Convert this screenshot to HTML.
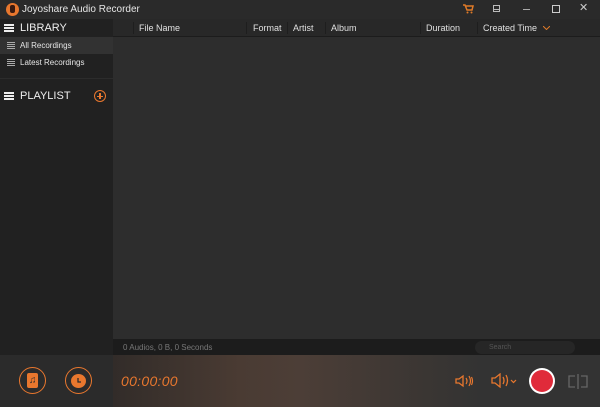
<!DOCTYPE html>
<html><head><meta charset="utf-8"><style>
*{margin:0;padding:0;box-sizing:border-box}
body{width:600px;height:407px;overflow:hidden;background:#2b2b2b;font-family:"Liberation Sans",sans-serif;font-size:9px;color:#ddd;position:relative}
.abs{position:absolute}
#title{left:0;top:0;width:600px;height:19px;background:#2a2a2a}
#side{left:0;top:19px;width:113px;height:336px;background:#212121}
#main{left:113px;top:19px;width:487px;height:320px;background:#2d2d2d}
#hdr{left:113px;top:19px;width:487px;height:18px;background:#282828;border-bottom:1px solid #1c1c1c}
.col{position:absolute;top:4px;font-size:9px;color:#e0e0e0}
.sep{position:absolute;top:3px;width:1px;height:12px;background:#1e1e1e}
#status{left:113px;top:339px;width:487px;height:17px;background:#1c1c1c}
#bot{left:0;top:355px;width:600px;height:52px;background:linear-gradient(90deg,#2b2b2b 0,#2b2b2b 113px,#322c29 113px,#4a3b33 240px,#4c3e37 300px,#3b3633 420px,#333 480px)}
.ham{position:absolute;width:10px;height:8px;background:linear-gradient(#eee 0,#eee 2px,transparent 2px,transparent 3px,#eee 3px,#eee 5px,transparent 5px,transparent 6px,#eee 6px,#eee 8px)}
.sm{position:absolute;width:8px;height:7px;background:linear-gradient(#aaa 0,#aaa 1px,transparent 1px,transparent 2px,#aaa 2px,#aaa 3px,transparent 3px,transparent 4px,#aaa 4px,#aaa 5px,transparent 5px,transparent 6px,#aaa 6px,#aaa 7px)}
</style></head><body>
<div id="title" class="abs">
 <div class="abs" style="left:6px;top:3px;width:13px;height:13px;border-radius:50%;background:#e8772e"></div>
 <div class="abs" style="left:10px;top:5px;width:5px;height:8px;border-radius:2px;background:#3a1a10"></div>
 <div class="abs" style="left:22px;top:4px;font-size:10px;color:#e6e6e6">Joyoshare Audio Recorder</div>
 <svg class="abs" style="left:463px;top:4px" width="11" height="10" viewBox="0 0 11 10"><path d="M0 1h2l2 5h5l1-4H3" fill="none" stroke="#e07a28" stroke-width="1.5"/><circle cx="4.5" cy="8.5" r="1" fill="#e07a28"/><circle cx="8.5" cy="8.5" r="1" fill="#e07a28"/></svg>
 <div class="abs" style="left:493px;top:5px;width:7px;height:7px;border:1px solid #bbb"></div>
 <div class="abs" style="left:493px;top:9px;width:7px;height:1px;background:#bbb"></div>
 <div class="abs" style="left:523px;top:9px;width:7px;height:1px;background:#aaa"></div>
 <div class="abs" style="left:552px;top:5px;width:8px;height:8px;border:1px solid #ccc"></div>
 <div class="abs" style="left:579px;top:1px;font-size:11px;color:#ccc">✕</div>
</div>
<div id="side" class="abs">
 <div class="ham" style="left:4px;top:5px"></div>
 <div class="abs" style="left:20px;top:3px;font-size:11px;color:#eee">LIBRARY</div>
 <div class="abs" style="left:0;top:18px;width:113px;height:17px;background:#323232"></div>
 <div class="sm" style="left:7px;top:23px"></div>
 <div class="abs" style="left:20px;top:22px;font-size:8px;color:#e6e6e6">All Recordings</div>
 <div class="sm" style="left:7px;top:40px"></div>
 <div class="abs" style="left:20px;top:39px;font-size:8px;color:#e6e6e6">Latest Recordings</div>
 <div class="abs" style="left:0;top:59px;width:113px;height:1px;background:#2c2c2c"></div>
 <div class="ham" style="left:4px;top:73px"></div>
 <div class="abs" style="left:20px;top:71px;font-size:11px;color:#eee">PLAYLIST</div>
 <div class="abs" style="left:94px;top:71px;width:12px;height:12px;border-radius:50%;border:1.5px solid #e8772e"></div>
 <div class="abs" style="left:97px;top:76.5px;width:6px;height:1.5px;background:#e8772e"></div>
 <div class="abs" style="left:99.2px;top:74px;width:1.5px;height:6px;background:#e8772e"></div>
</div>
<div id="main" class="abs"></div>
<div id="hdr" class="abs">
 <div class="sep" style="left:20px"></div>
 <div class="col" style="left:26px">File Name</div>
 <div class="sep" style="left:133px"></div>
 <div class="col" style="left:140px">Format</div>
 <div class="sep" style="left:174px"></div>
 <div class="col" style="left:180px">Artist</div>
 <div class="sep" style="left:212px"></div>
 <div class="col" style="left:218px">Album</div>
 <div class="sep" style="left:307px"></div>
 <div class="col" style="left:313px">Duration</div>
 <div class="sep" style="left:364px"></div>
 <div class="col" style="left:370px">Created Time</div>
 <svg class="abs" style="left:430px;top:7px" width="7" height="4"><path d="M0 0l3.5 3.5L7 0" fill="none" stroke="#e07a28" stroke-width="1"/></svg>
</div>
<div id="status" class="abs">
 <div class="abs" style="left:10px;top:4px;font-size:8px;color:#777">0 Audios, 0 B, 0 Seconds</div>
 <div class="abs" style="left:362px;top:2px;width:100px;height:13px;border-radius:7px;background:#262626"></div>
 <div class="abs" style="left:376px;top:5px;font-size:7px;color:#555">Search</div>
</div>
<div id="bot" class="abs">
 <div class="abs" style="left:19px;top:12px;width:27px;height:27px;border-radius:50%;border:1.5px solid #e8772e"></div>
 <div class="abs" style="left:27px;top:18px;width:11px;height:15px;border-radius:2px;background:#e8772e"></div>
 <div class="abs" style="left:29px;top:20px;font-size:10px;color:#2b2b2b">♫</div>
 <div class="abs" style="left:65px;top:12px;width:27px;height:27px;border-radius:50%;border:1.5px solid #e8772e"></div>
 <div class="abs" style="left:71px;top:19px;width:15px;height:14px;border-radius:50%;background:#e8772e"></div>
 <svg class="abs" style="left:73px;top:21px" width="11" height="10"><path d="M5 2v4h3" fill="none" stroke="#2b2b2b" stroke-width="1.3"/></svg>
 <div class="abs" style="left:121px;top:18px;font-size:14px;font-style:italic;color:#e8772e;letter-spacing:0.3px">00:00:00</div>
 <svg class="abs" style="left:455px;top:19px" width="19" height="14"><path d="M1 5h3l4-3v10l-4-3H1z" fill="none" stroke="#e8772e" stroke-width="1.3"/><path d="M11 4q2 3 0 6M14 2q3 5 0 10M16.5 3q2 4 0 8" fill="none" stroke="#e8772e" stroke-width="1.2"/></svg>
 <svg class="abs" style="left:491px;top:18px" width="28" height="15"><path d="M1 5h3l5-4v13l-5-4H1z" fill="none" stroke="#e8772e" stroke-width="1.3"/><path d="M12 4q2 3.5 0 7M15 2q3 5.5 0 11" fill="none" stroke="#e8772e" stroke-width="1.3"/><path d="M20 7l2.5 2.5L25 7" fill="none" stroke="#e8772e" stroke-width="1.2"/></svg>
 <div class="abs" style="left:529px;top:13px;width:26px;height:26px;border-radius:50%;background:#fff"></div>
 <div class="abs" style="left:531px;top:15px;width:22px;height:22px;border-radius:50%;background:#e02b3a"></div>
 <svg class="abs" style="left:568px;top:18px" width="20" height="16"><path d="M7 3H1v11h6M13 3h6v11h-6M10 1v15" fill="none" stroke="#666" stroke-width="1.3"/></svg>
</div>
</body></html>
